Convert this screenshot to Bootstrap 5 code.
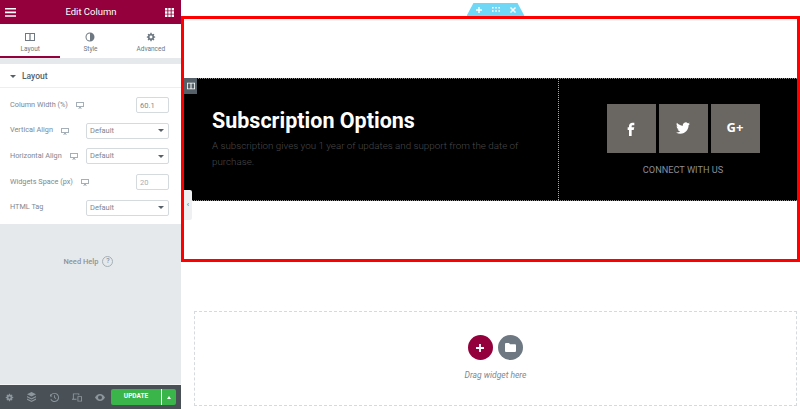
<!DOCTYPE html>
<html lang="en">
<head>
<meta charset="UTF-8">
<meta name="viewport" content="width=device-width, initial-scale=1.0">
<title>Edit Column</title>
<link href="https://cdn.jsdelivr.net/npm/bootstrap@5.3.3/dist/css/bootstrap.min.css" rel="stylesheet">
<style>
  html, body { height: 409px; overflow: hidden; }
  body { font-family: Roboto, "Liberation Sans", sans-serif; background: #fff; }
  .side-panel { width: 181px; height: 409px; background: #e6e9ec; flex: none; }
  .panel-head { height: 24px; background: #93003c; color: #fff; font-size: 9.5px; padding: 0 7px 0 5px; }
  .panel-tabs { height: 34px; background: #fff; }
  .panel-tab { flex: 1; color: #6d7882; font-size: 6.5px; padding-top: 8px; line-height: 9px; gap: 3px; }
  .panel-tab svg { fill: #6d7882; }
  .panel-tab.is-active { border-bottom: 2px solid #93003c; }
  .panel-gap { height: 6px; }
  .panel-body { background: #fff; height: 160px; color: #6d7882; }
  .section-title { height: 24px; border-bottom: 1px solid #eceef0; padding: 1px 0 0 10px; font-size: 8.5px; font-weight: 500; color: #556068; gap: 6px; }
  .caret-down { width: 0; height: 0; border-left: 3px solid transparent; border-right: 3px solid transparent; border-top: 3px solid #556068; }
  .field-rows { padding: 4.5px 12px 0 10px; }
  .field-row { height: 25.6px; font-size: 7.3px; color: #7d8891; }
  .field-row svg { fill: #a4afb7; margin-left: 8px; flex: none; }
  .field-input.form-control, .field-input.form-select { font-size: 7.5px; color: #7d8891; height: 16px; min-height: 0; padding: 0 3px; border-radius: 2px; border-color: #d5dadf; line-height: 14px; }
  .field-input.form-control { width: 33px; }
  .field-input.form-select { width: 83px; background-size: 6px 3px; background-position: right 4px center; background-image: url("data:image/svg+xml,%3Csvg xmlns='http://www.w3.org/2000/svg' viewBox='0 0 6 3'%3E%3Cpath fill='%23556068' d='M0 0h6L3 3z'/%3E%3C/svg%3E"); }
  .field-input:disabled { background: #fff; color: #a4afb7; }
  .help-area { height: 160px; padding: 32px 4px 0 0; font-size: 7.5px; font-weight: 500; color: #8a949c; gap: 4px; }
  .help-mark { width: 11px; height: 11px; border: 1px solid #a4afb7; border-radius: 50%; font-size: 7px; line-height: 9px; text-align: center; color: #8a949c; }
  .panel-foot { height: 25px; background: #495157; padding: 0 5px 0 0; border-top: 1px solid #f4f5f6; }
  .foot-icons { gap: 4.7px; }
  .foot-icon { width: 18px; }
  .foot-icon svg { fill: #8d969d; }
  .update-btn { width: 50px; height: 16px; background: #39b54a; color: #fff; font-size: 6.5px; font-weight: 700; border-radius: 2px 0 0 2px; }
  .update-more { width: 15px; height: 16px; background: #39b54a; border-left: 1px solid #fff; border-radius: 0 2px 2px 0; }
  .caret-up { width: 0; height: 0; border-left: 2.5px solid transparent; border-right: 2.5px solid transparent; border-bottom: 3px solid #fff; }

  .canvas-area { min-width: 0; }
  .red-frame { height: 246px; margin-top: 16px; border: 3px solid #f00; }
  .black-band { height: 123px; width: 100%; background: #000; border-top: 1px dotted #888; border-bottom: 1px dotted #888; }
  .text-col { width: 375px; flex: none; padding: 20px 0 0 28px; border-right: 1px dotted #aaa; }
  .sub-title { font-size: 21.5px; font-weight: 700; color: #fff; line-height: 30px; margin: 7px 0 2px; }
  .sub-text { font-size: 9.8px; line-height: 16px; color: #4a4a4a; font-weight: 300; margin: 0; width: 320px; }
  .social-col { padding: 25px 0 0 10px; }
  .social-row { gap: 3px; }
  .social-box { width: 49px; height: 49px; background: #6a6661; color: #fff; }
  .social-box svg { fill: #fff; }
  .gplus-text { font-size: 13px; font-weight: 700; font-family: "Open Sans", Roboto, sans-serif; }
  .connect-text { font-size: 9.2px; color: #8b8e96; margin-top: 11px; line-height: 12px; }
  .section-handle { left: 50%; top: 3px; width: 58px; height: 13px; margin-left: -24px; background: #71d7f7; clip-path: polygon(12% 0, 88% 0, 100% 100%, 0 100%); gap: 10px; }
  .section-handle svg { fill: #fff; }
  .col-handle { left: 3px; top: 78px; width: 13px; height: 16px; background: #556068; }
  .col-handle svg { fill: #fff; }
  .collapse-tab { left: 3px; top: 190px; width: 8px; height: 30px; background: #eef0f2; color: #556068; font-size: 8px; border-radius: 0 2px 2px 0; }
  .drop-zone { margin: 49px 3px 0 13px; height: 95px; border: 1px dashed #d5dadf; padding-top: 23px; }
  .drop-btns { gap: 5.5px; }
  .drop-btn { width: 25px; height: 25px; border-radius: 50%; }
  .drop-add { background: #93003c; }
  .drop-tpl { background: #6d7882; }
  .drop-btn svg { fill: #fff; }
  .drop-label { font-size: 8.5px; font-style: italic; color: #7d8891; margin-top: 10px; line-height: 11px; }
</style>
</head>
<body class="d-flex">

<aside class="side-panel d-flex flex-column">
  <div class="panel-head d-flex align-items-center justify-content-between">
    <svg width="12" height="9" viewBox="0 0 12 9"><path fill="#fff" d="M0 0h11v1.600H0zM0 3.600h11v1.600H0zM0 7.200h11v1.600H0z"/></svg>
    <span>Edit Column</span>
    <svg width="9" height="9" viewBox="0 0 9 9"><path fill="#fff" d="M0 0h2.400v2.400H0zM3.300 0h2.400v2.400H3.300zM6.600 0H9v2.400H6.600zM0 3.300h2.400v2.400H0zM3.300 3.300h2.400v2.400H3.300zM6.600 3.300H9v2.400H6.600zM0 6.600h2.400V9H0zM3.300 6.600h2.400V9H3.300zM6.600 6.600H9V9H6.600z"/></svg>
  </div>
  <div class="panel-tabs d-flex">
    <div class="panel-tab is-active d-flex flex-column align-items-center">
      <svg width="10" height="10" viewBox="0 0 10 10"><path d="M0 1h10v8H0zm1 1v6h3.400V2zm4.600 0v6H9V2z" fill-rule="evenodd"/></svg>
      <span>Layout</span>
    </div>
    <div class="panel-tab d-flex flex-column align-items-center">
      <svg width="10" height="10" viewBox="0 0 10 10"><path d="M5 .5a4.500 4.500 0 1 0 0 9 4.500 4.500 0 0 0 0-9zm0 1v7a3.500 3.500 0 0 1 0-7z" fill-rule="evenodd"/></svg>
      <span>Style</span>
    </div>
    <div class="panel-tab d-flex flex-column align-items-center">
      <svg width="10" height="10" viewBox="0 0 24 24"><path d="M22 13.500v-3l-2.700-.5-.7-1.700 1.500-2.300-2.100-2.100-2.300 1.500-1.700-.7L13.500 2h-3L10 4.700l-1.700.7L6 3.900 3.900 6l1.500 2.300-.7 1.700-2.700.5v3l2.700.5.7 1.700L3.900 18 6 20.100l2.300-1.500 1.700.7.5 2.700h3l.5-2.700 1.700-.7 2.300 1.500 2.100-2.100-1.500-2.300.7-1.700zM12 15.500a3.500 3.500 0 1 1 0-7 3.500 3.500 0 0 1 0 7z" fill-rule="evenodd"/></svg>
      <span>Advanced</span>
    </div>
  </div>
  <div class="panel-gap"></div>
  <div class="panel-body">
    <div class="section-title d-flex align-items-center"><span class="caret-down"></span><span>Layout</span></div>
    <div class="field-rows">
      <div class="field-row d-flex align-items-center">
        <span>Column Width (%)</span>
        <svg width="8" height="8" viewBox="0 0 8 8"><path d="M0 1h8v5H5v1h1v.6H2V7h1V6H0zm1 1v3h6V2z" fill-rule="evenodd"/></svg>
        <input class="field-input form-control ms-auto" type="text" value="60.1">
      </div>
      <div class="field-row d-flex align-items-center">
        <span>Vertical Align</span>
        <svg width="8" height="8" viewBox="0 0 8 8"><path d="M0 1h8v5H5v1h1v.6H2V7h1V6H0zm1 1v3h6V2z" fill-rule="evenodd"/></svg>
        <select class="field-input form-select ms-auto"><option>Default</option></select>
      </div>
      <div class="field-row d-flex align-items-center">
        <span>Horizontal Align</span>
        <svg width="8" height="8" viewBox="0 0 8 8"><path d="M0 1h8v5H5v1h1v.6H2V7h1V6H0zm1 1v3h6V2z" fill-rule="evenodd"/></svg>
        <select class="field-input form-select ms-auto"><option>Default</option></select>
      </div>
      <div class="field-row d-flex align-items-center">
        <span>Widgets Space (px)</span>
        <svg width="8" height="8" viewBox="0 0 8 8"><path d="M0 1h8v5H5v1h1v.6H2V7h1V6H0zm1 1v3h6V2z" fill-rule="evenodd"/></svg>
        <input class="field-input form-control ms-auto" type="text" value="20" disabled>
      </div>
      <div class="field-row d-flex align-items-center">
        <span>HTML Tag</span>
        <select class="field-input form-select ms-auto"><option>Default</option></select>
      </div>
    </div>
  </div>
  <div class="help-area d-flex justify-content-center align-items-start">
    <span>Need Help</span><span class="help-mark">?</span>
  </div>
  <div class="panel-foot d-flex align-items-center">
    <div class="foot-icons d-flex align-items-center me-auto">
      <span class="foot-icon d-flex justify-content-center"><svg width="9" height="9" viewBox="0 0 24 24"><path d="M22 13.500v-3l-2.700-.5-.7-1.700 1.500-2.300-2.100-2.100-2.300 1.500-1.700-.7L13.500 2h-3L10 4.700l-1.700.7L6 3.900 3.900 6l1.500 2.300-.7 1.700-2.700.5v3l2.700.5.7 1.700L3.900 18 6 20.100l2.300-1.500 1.700.7.5 2.700h3l.5-2.700 1.700-.7 2.300 1.500 2.100-2.100-1.500-2.300.7-1.700zM12 15a3 3 0 1 1 0-6 3 3 0 0 1 0 6z" fill-rule="evenodd"/></svg></span>
      <span class="foot-icon d-flex justify-content-center"><svg width="9" height="10" viewBox="0 0 10 11"><path d="M5 0l5 2.500L5 5 0 2.500zM0 4.500L5 7l5-2.500v1.300L5 8.300 0 5.800zM0 7.200l5 2.500 5-2.500v1.300L5 11 0 8.500z"/></svg></span>
      <span class="foot-icon d-flex justify-content-center"><svg width="9" height="9" viewBox="0 0 10 10"><path d="M5 0a5 5 0 1 1-4.600 7l1-.4A4 4 0 1 0 1.500 3l1.200 1H0V1l.8.9A5 5 0 0 1 5 0zm-.5 2.500h1v2.300l1.500 1-.5.8-2-1.300z"/></svg></span>
      <span class="foot-icon d-flex justify-content-center"><svg width="10" height="9" viewBox="0 0 11 9"><path d="M1 0h7v2H7V1H2v5h3v1H0V6h1zM6 3h5v6H6zm1 1v4h3V4z" fill-rule="evenodd"/></svg></span>
      <span class="foot-icon d-flex justify-content-center"><svg width="10" height="7" viewBox="0 0 10 7"><path d="M5 0c2.300 0 4 1.800 5 3.500C9 5.200 7.300 7 5 7S1 5.200 0 3.500C1 1.800 2.700 0 5 0zm0 1.500a2 2 0 1 0 0 4 2 2 0 0 0 0-4z" fill-rule="evenodd"/></svg></span>
    </div>
    <span class="update-btn d-flex align-items-center justify-content-center">UPDATE</span>
    <span class="update-more d-flex align-items-center justify-content-center"><span class="caret-up"></span></span>
  </div>
</aside>

<main class="canvas-area flex-grow-1 position-relative">
  <div class="section-handle position-absolute d-flex align-items-center justify-content-center">
    <svg width="6" height="6" viewBox="0 0 6 6"><path d="M2.300 0h1.400v2.300H6v1.400H3.700V6H2.300V3.700H0V2.300h2.300z"/></svg>
    <svg width="8" height="5" viewBox="0 0 8 5"><path d="M0 0h1.600v1.600H0zM3.200 0h1.600v1.600H3.200zM6.400 0H8v1.600H6.400zM0 3.200h1.600v1.600H0zM3.200 3.200h1.600v1.600H3.200zM6.400 3.200H8v1.600H6.400z"/></svg>
    <svg width="6" height="6" viewBox="0 0 6 6"><path d="M1 0l2 2 2-2 1 1-2 2 2 2-1 1-2-2-2 2-1-1 2-2-2-2z"/></svg>
  </div>
  <div class="red-frame d-flex align-items-center">
    <div class="black-band d-flex">
      <div class="text-col">
        <h2 class="sub-title">Subscription Options</h2>
        <p class="sub-text">A subscription gives you 1 year of updates and support from the date of purchase.</p>
      </div>
      <div class="social-col flex-grow-1 d-flex flex-column align-items-center">
        <div class="social-row d-flex">
          <div class="social-box d-flex align-items-center justify-content-center"><svg width="16" height="16" viewBox="0 0 24 24"><path d="M14 8h3V4h-3c-2.800 0-5 2.200-5 5v2H7v4h2v9h4v-9h3l1-4h-4V9c0-.6.4-1 1-1z"/></svg></div>
          <div class="social-box d-flex align-items-center justify-content-center"><svg width="14" height="14" viewBox="0 0 24 24"><path d="M23.953 4.570a10 10 0 01-2.825.775 4.958 4.958 0 002.163-2.723c-.951.555-2.005.959-3.127 1.184a4.920 4.920 0 00-8.384 4.482C7.690 8.095 4.067 6.130 1.640 3.162a4.822 4.822 0 00-.666 2.475c0 1.710.870 3.213 2.188 4.096a4.904 4.904 0 01-2.228-.616v.060a4.923 4.923 0 003.946 4.827 4.996 4.996 0 01-2.212.085 4.936 4.936 0 004.604 3.417 9.867 9.867 0 01-6.102 2.105c-.390 0-.779-.023-1.170-.067a13.995 13.995 0 007.557 2.209c9.053 0 13.998-7.496 13.998-13.985 0-.210 0-.420-.015-.630A9.935 9.935 0 0024 4.590z"/></svg></div>
          <div class="social-box d-flex align-items-center justify-content-center"><span class="gplus-text">G+</span></div>
        </div>
        <div class="connect-text">CONNECT WITH US</div>
      </div>
    </div>
  </div>
  <div class="col-handle position-absolute d-flex align-items-center justify-content-center">
    <svg width="8" height="8" viewBox="0 0 10 10"><path d="M0 1h10v8H0zm1 1v6h3.400V2zm4.600 0v6H9V2z" fill-rule="evenodd"/></svg>
  </div>
  <div class="collapse-tab position-absolute d-flex align-items-center justify-content-center">‹</div>
  <div class="drop-zone d-flex flex-column align-items-center">
    <div class="drop-btns d-flex">
      <div class="drop-btn drop-add d-flex align-items-center justify-content-center"><svg width="8" height="8" viewBox="0 0 8 8"><path d="M3.100 0h1.800v3.100H8v1.800H4.900V8H3.100V4.900H0V3.100h3.100z"/></svg></div>
      <div class="drop-btn drop-tpl d-flex align-items-center justify-content-center"><svg width="11" height="9" viewBox="0 0 11 9"><path d="M0 1a1 1 0 0 1 1-1h3l1 1.300h5a1 1 0 0 1 1 1V8a1 1 0 0 1-1 1H1a1 1 0 0 1-1-1z"/></svg></div>
    </div>
    <div class="drop-label">Drag widget here</div>
  </div>
</main>

</body>
</html>
